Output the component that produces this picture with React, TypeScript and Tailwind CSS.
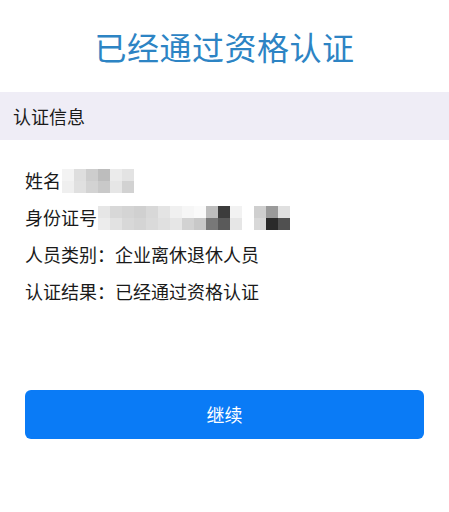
import React from 'react';

const NAME_MOSAIC = [
  ['#f3f3f3', '#dedede', '#cdcdcd', '#bdbdbd', '#ebebeb', '#e3e3e3'],
  ['#efefef', '#e0e0e0', '#d3d3d3', '#c9c9c9', '#e6e6e6', '#d2d2d2'],
];

const ID_MOSAIC = [
  ['#e6e6e6', '#d8d8d8', '#d4d4d4', '#d0d0d0', '#d8d8d8', '#e4e4e4', '#f0f0f0', '#f6f6f6', '#fafafa', '#bdbdbd', '#3c3c3c', '#f2f2f2', '#ffffff', '#cfcfcf', '#9a9a9a', '#e0e0e0'],
  ['#ececec', '#e2e2e2', '#d8d8d8', '#d4d4d4', '#dadada', '#e0e0e0', '#e6e6e6', '#d2d2d2', '#c8c8c8', '#787878', '#5a5a5a', '#e6e6e6', '#ffffff', '#d8d8d8', '#2a2a2a', '#505050'],
];

function Mosaic({ rows, cell = 12 }: { rows: string[][]; cell?: number }) {
  return (
    <div className="flex flex-col blur-[0.6px]">
      {rows.map((row, i) => (
        <div key={i} className="flex">
          {row.map((c, j) => (
            <div key={j} style={{ width: cell, height: cell, backgroundColor: c }} />
          ))}
        </div>
      ))}
    </div>
  );
}

export default function App() {
  return (
    <div
      className="w-[449px] h-[512px] bg-white text-[#1a1a1a]"
      style={{ fontFamily: '"Noto Sans CJK SC", "Noto Sans", sans-serif' }}
    >
      {/* 标题 */}
      <div className="h-[92px] flex items-center justify-center">
        <h1 className="text-[32px] leading-none text-[#2d84c4] tracking-[0.5px]">已经通过资格认证</h1>
      </div>

      {/* 分组标题 */}
      <div className="h-[48px] bg-[#efedf6] flex items-center pl-[13px] text-[18px]">认证信息</div>

      {/* 信息列表 */}
      <div className="pt-[22px] px-[25px] text-[18px]">
        <div className="h-[37px] flex items-center">
          <span>姓名</span>
          <div className="ml-[1px]">
            <Mosaic rows={NAME_MOSAIC} />
          </div>
        </div>
        <div className="h-[37px] flex items-center">
          <span>身份证号</span>
          <div className="ml-[1px] mt-[1px]">
            <Mosaic rows={ID_MOSAIC} />
          </div>
        </div>
        <div className="h-[37px] flex items-center">人员类别：企业离休退休人员</div>
        <div className="h-[37px] flex items-center">认证结果：已经通过资格认证</div>
      </div>

      {/* 按钮 */}
      <div className="px-[25px] pt-[80px]">
        <button className="w-full h-[49px] rounded-[6px] bg-[#0a7bf6] text-white text-[18px] flex items-center justify-center">
          继续
        </button>
      </div>
    </div>
  );
}
